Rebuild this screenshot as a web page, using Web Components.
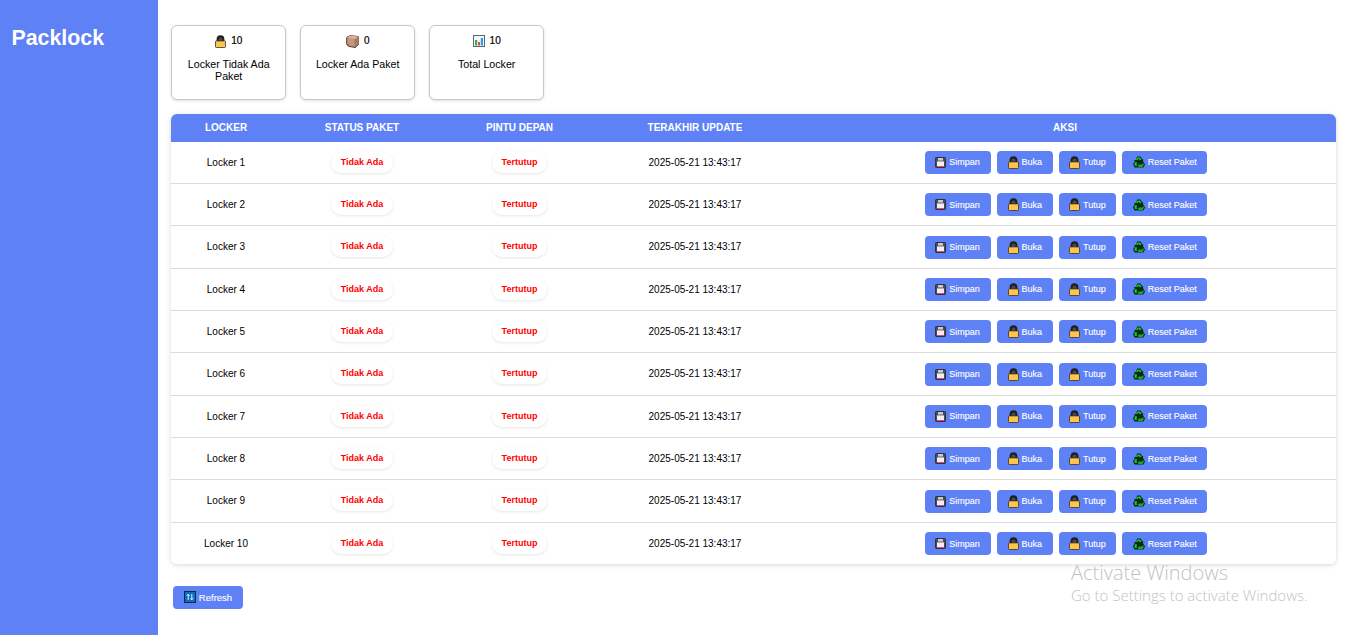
<!DOCTYPE html>
<html lang="id">
<head>
<meta charset="utf-8">
<title>Packlock</title>
<style>
  html, body { margin: 0; height: 100%; }
  body { font-family: "Liberation Sans", Arial, sans-serif; background: #fff; color: #000; overflow: hidden; }
</style>
</head>
<body>
<pack-app></pack-app>

<script>
// emoji are not installed in the sandbox, so each one is a small svg
const ICONS = {
  lock: `<svg viewBox="0 0 11 13" width="11" height="13"><path d="M1.6 7V4.2a3.9 3.9 0 0 1 7.8 0V7z" fill="#1f1f1f"/><path d="M3.5 6V4.4a2 2 0 0 1 4 0V6z" fill="#4a4a4a"/><rect x=".5" y="5.9" width="10" height="6.6" rx=".8" fill="#fdc54a" stroke="#3a3128" stroke-width=".8"/></svg>`,
  box: `<svg viewBox="0 0 13 13" width="13" height="13"><path d="M.7 2.4 4.2.6l8 .9v8.3l-3 2.7-6.7-1.2L.7 9.6z" fill="#c4977a" stroke="#3b3029" stroke-width=".9" stroke-linejoin="round"/><path d="M.9 2.5 9.2 4l3-2.5-8-.9z" fill="#d9b195"/><path d="M9.2 4v8.4" stroke="#7c5a42" stroke-width=".8"/><path d="M9.6 4.4l2.4-2v7.2l-2.4 2.2z" fill="#a87c5c"/><circle cx="2.6" cy="9.7" r=".8" fill="#e53950"/></svg>`,
  chart: `<svg viewBox="0 0 12 12" width="12" height="12"><rect x=".5" y=".5" width="11" height="11" fill="#f5f7f8" stroke="#5a6670"/><rect x="2" y="5" width="2.2" height="5.5" fill="#35b34a"/><rect x="5" y="7" width="2" height="3.5" fill="#e5484d"/><rect x="7.8" y="3" width="2.2" height="7.5" fill="#2f9be0"/></svg>`,
  save: `<svg viewBox="0 0 11 11" width="11" height="11"><rect x=".5" y=".5" width="10" height="10" rx=".8" fill="#4a4a55" stroke="#30303a"/><rect x="2" y="4.4" width="7" height="4.6" fill="#f3eef0"/><rect x="3" y="1" width="5" height="2.6" fill="#c9cbd0"/><rect x="2" y="9" width="7" height="1" fill="#e8487f"/></svg>`,
  recycle: `<svg viewBox="0 0 12 12" width="12" height="12"><path d="M4.2.6h3.4l1.6 2.6 1-.3-.2 2.2 2 3.6-1.6 2.7H1.6L0 8.2l1.8-3-.9-.7 2-.7z" fill="#072a0e"/><path d="M4.6 1.5h2.6l1.4 2.4-2 .4-1-1.6-1.2 1.6-1.5-.8z" fill="#12c22e"/><path d="M1.2 8.1l1.3-2.3 1.7.9-.7 1.7.9 1.5H2z" fill="#12c22e"/><path d="M5.2 10.9V8.6h4l.9-1.6.8 1.3-1.3 2.6z" fill="#0fae28"/></svg>`,
  refresh: `<svg viewBox="0 0 12 12" width="12" height="12"><rect x=".5" y=".5" width="11" height="11" fill="#0a6fc2" stroke="#12263c"/><path d="M4.2 9V3.4M2.8 4.8l1.4-1.6 1.4 1.6M7.8 3v5.6M6.4 7.2l1.4 1.6 1.4-1.6" fill="none" stroke="#fff" stroke-width=".9"/></svg>`
};

class PackSidebar extends HTMLElement {
  constructor() {
    super();
    this.attachShadow({ mode: 'open' }).innerHTML = `
      <style>
        :host { display: block; width: 158px; flex: none; background: #5f81f6; color: #fff; box-sizing: border-box; padding: 26px 11.5px; }
        h1 { margin: 0; font-size: 21.33px; line-height: 24px; font-weight: 700; }
      </style>
      <h1><slot></slot></h1>`;
  }
}

class StatCard extends HTMLElement {
  constructor() {
    super();
    this.attachShadow({ mode: 'open' }).innerHTML = `
      <style>
        :host { display: block; box-sizing: border-box; height: 75px; background: #fff; border: 1px solid #c8c8c8; border-radius: 6px; box-shadow: 0 1px 3px rgba(0,0,0,.12); padding: 7px 12px; text-align: center; font-size: 10.67px; line-height: 12px; }
        .num { display: flex; justify-content: center; align-items: center; gap: 5px; height: 16px; font-size: 10px; -webkit-text-stroke: .2px #000; margin-bottom: 9px; }
        svg { display: block; }
      </style>
      <div class="num"><span id="ic"></span><span id="val"></span></div>
      <slot></slot>`;
  }
  connectedCallback() {
    this.shadowRoot.getElementById('ic').innerHTML = ICONS[this.getAttribute('icon')] || '';
    this.shadowRoot.getElementById('val').textContent = this.getAttribute('value');
  }
}

class ActionBtn extends HTMLElement {
  constructor() {
    super();
    this.attachShadow({ mode: 'open' }).innerHTML = `
      <style>
        :host { display: inline-flex; align-items: center; justify-content: center; gap: 3px; box-sizing: border-box; height: 23px; padding: 0 10.5px; background: #5f81f6; color: #fff; border-radius: 4px; font-size: 9px; white-space: nowrap; -webkit-text-stroke: .12px #fff; }
        svg { display: block; }
        #ic { height: 13px; display: flex; align-items: center; }
      </style>
      <span id="ic"></span><slot></slot>`;
  }
  connectedCallback() {
    this.shadowRoot.getElementById('ic').innerHTML = ICONS[this.getAttribute('icon')] || '';
  }
}

class StatusPill extends HTMLElement {
  constructor() {
    super();
    this.attachShadow({ mode: 'open' }).innerHTML = `
      <style>
        :host { display: inline-block; box-sizing: border-box; height: 21px; padding: 3px 9.5px 0; background: #fff; border-radius: 11px; box-shadow: 0 1px 3px rgba(0,0,0,.1); color: #f00; font-size: 9px; line-height: 14px; font-weight: 700; white-space: nowrap; }
      </style>
      <slot></slot>`;
  }
}

class LockerRow extends HTMLElement {
  constructor() {
    super();
    this.attachShadow({ mode: 'open' }).innerHTML = `
      <style>
        :host { display: grid; grid-template-columns: var(--cols); align-items: center; box-sizing: border-box; height: 42.33px; border-bottom: 1px solid #dcdcdc; font-size: 10px; text-align: center; background: #fff; }
        :host(:last-child) { border-bottom: 0; height: 42px; }
        .actions { display: flex; justify-content: center; gap: 6px; padding: .4px 0 0 2px; }
        .actions action-btn:first-child { padding-right: 11.3px; }
      </style>
      <div id="name"></div>
      <div><status-pill>Tidak Ada</status-pill></div>
      <div><status-pill>Tertutup</status-pill></div>
      <div id="time"></div>
      <div class="actions">
        <action-btn icon="save">Simpan</action-btn>
        <action-btn icon="lock">Buka</action-btn>
        <action-btn icon="lock">Tutup</action-btn>
        <action-btn icon="recycle">Reset Paket</action-btn>
      </div>`;
  }
  connectedCallback() {
    this.shadowRoot.getElementById('name').textContent = this.getAttribute('name');
    this.shadowRoot.getElementById('time').textContent = this.getAttribute('time');
  }
}

class LockerTable extends HTMLElement {
  constructor() {
    super();
    this.attachShadow({ mode: 'open' }).innerHTML = `
      <style>
        :host { display: block; --cols: 110px 162px 153px 198px 1fr; border-radius: 6px; background: #fff; box-shadow: 0 1px 5px rgba(0,0,0,.16); }
        .head { display: grid; grid-template-columns: var(--cols); align-items: center; height: 27.6px; background: #5f81f6; color: #fff; font-size: 10px; font-weight: 700; text-align: center; border-radius: 6px 6px 0 0; }
        #rows { height: 422.6px; overflow: hidden; border-radius: 0 0 6px 6px; }
      </style>
      <div class="head"><div>LOCKER</div><div>STATUS PAKET</div><div>PINTU DEPAN</div><div>TERAKHIR UPDATE</div><div>AKSI</div></div>
      <div id="rows"></div>`;
    const rows = this.shadowRoot.getElementById('rows');
    for (let i = 1; i <= 10; i++) {
      const r = document.createElement('locker-row');
      r.setAttribute('name', 'Locker ' + i);
      r.setAttribute('time', '2025-05-21 13:43:17');
      rows.appendChild(r);
    }
  }
}

class PackApp extends HTMLElement {
  constructor() {
    super();
    this.attachShadow({ mode: 'open' }).innerHTML = `
      <style>
        :host { display: flex; height: 635px; position: relative; font-family: "Liberation Sans", Arial, sans-serif; }
        main { flex: 1; min-width: 0; box-sizing: border-box; padding: 25px 12px 0 13px; }
        .cards { display: flex; gap: 13.6px; margin-bottom: 14px; }
        stat-card { width: 115.4px; }
        .foot { padding: 21.8px 2px 0; }
        .foot action-btn { width: 70px; padding: 0; font-size: 9.5px; }
        .watermark { position: absolute; left: 1071px; top: 561px; color: #c2c2c2; font-family: "Open Sans", sans-serif; font-weight: 300; pointer-events: none; }
        .watermark div:first-child { font-size: 20px; line-height: 24px; }
        .watermark div:last-child { font-size: 15px; line-height: 21px; }
      </style>
      <pack-sidebar>Packlock</pack-sidebar>
      <main>
        <div class="cards">
          <stat-card icon="lock" value="10">Locker Tidak Ada Paket</stat-card>
          <stat-card icon="box" value="0">Locker Ada Paket</stat-card>
          <stat-card icon="chart" value="10">Total Locker</stat-card>
        </div>
        <locker-table></locker-table>
        <div class="foot"><action-btn icon="refresh">Refresh</action-btn></div>
      </main>
      <div class="watermark"><div>Activate Windows</div><div>Go to Settings to activate Windows.</div></div>`;
  }
}

// children first, so the nested elements are upgraded as they are created
customElements.define('status-pill', StatusPill);
customElements.define('action-btn', ActionBtn);
customElements.define('locker-row', LockerRow);
customElements.define('locker-table', LockerTable);
customElements.define('stat-card', StatCard);
customElements.define('pack-sidebar', PackSidebar);
customElements.define('pack-app', PackApp);
</script>
</body>
</html>
